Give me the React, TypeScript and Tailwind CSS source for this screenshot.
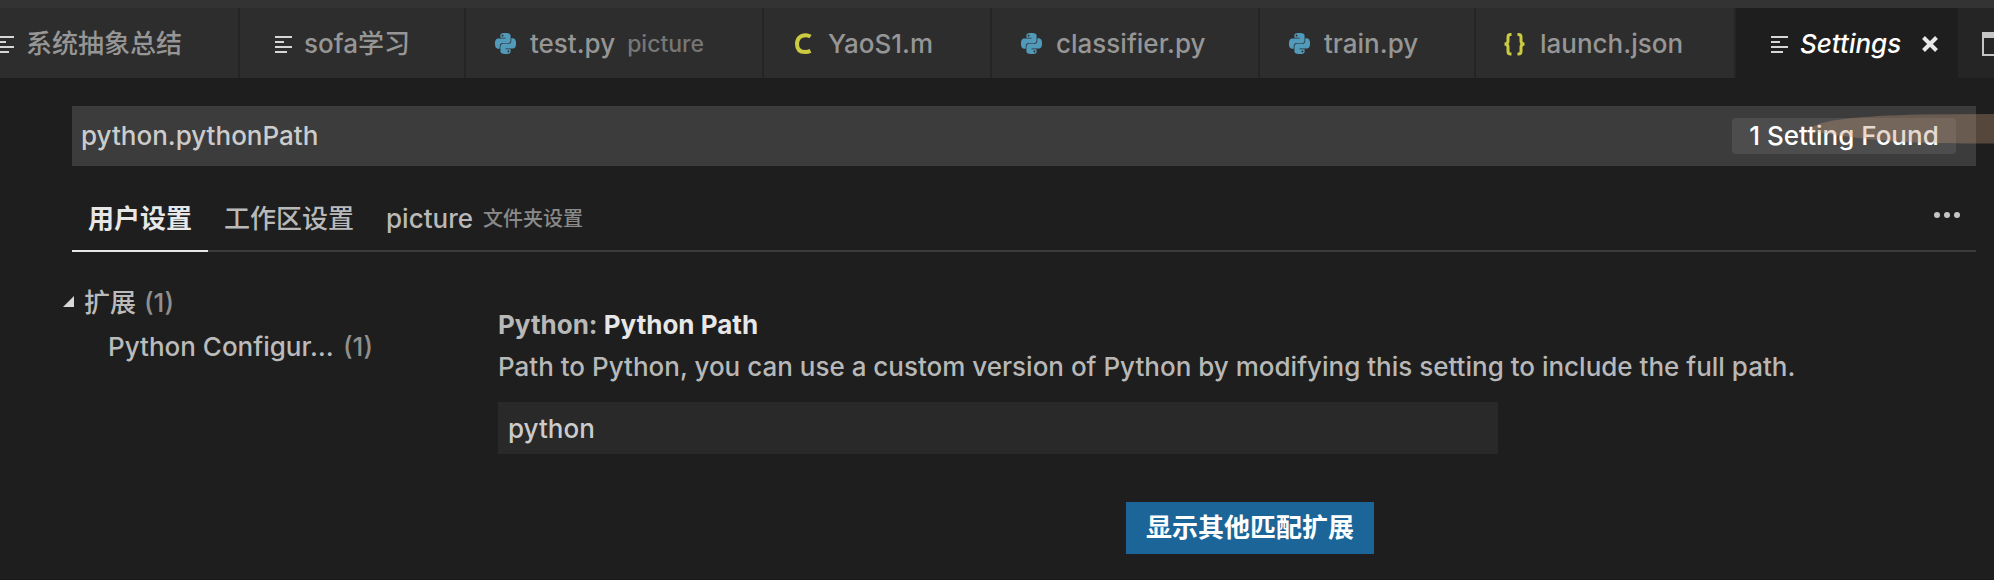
import type { ReactNode } from 'react';

const LinesIcon = () => (
  <svg viewBox="0 0 32 32" className="size-8 shrink-0" fill="#d4d7d6" aria-hidden="true">
    <rect x="11" y="8" width="17" height="2" />
    <rect x="11" y="13" width="9" height="2" />
    <rect x="11" y="18" width="17" height="2" />
    <rect x="11" y="23" width="12" height="2" />
  </svg>
);

const PythonIcon = () => (
  <svg viewBox="0 0 32 32" className="size-8 shrink-0" fill="#519aba" aria-hidden="true">
    <g transform="translate(5 5) scale(0.875)">
      <path
        fillRule="evenodd"
        d="M14.25.18l.9.2.73.26.59.3.45.32.34.34.25.34.16.33.1.3.04.26.02.2-.01.13V8.5l-.05.63-.13.55-.21.46-.26.38-.3.31-.33.25-.35.19-.35.14-.33.1-.3.07-.26.04-.21.02H8.77l-.69.05-.59.14-.5.22-.41.27-.33.32-.27.35-.2.36-.15.37-.1.35-.07.32-.04.27-.02.21v3.06H3.17l-.21-.03-.28-.07-.32-.12-.35-.18-.36-.26-.36-.36-.35-.46-.32-.59-.28-.73-.21-.88-.14-1.05-.05-1.23.06-1.22.16-1.04.24-.87.32-.71.36-.57.4-.44.42-.33.42-.24.4-.16.36-.1.32-.05.24-.01h.16l.06.01h8.16v-.83H6.18l-.01-2.75-.02-.37.05-.34.11-.31.17-.28.25-.26.31-.23.38-.2.44-.18.51-.15.58-.12.64-.1.71-.06.77-.04.84-.02 1.27.05zm-6.3 1.98l-.23.33-.08.41.08.41.23.34.33.22.41.09.41-.09.33-.22.23-.34.08-.41-.08-.41-.23-.33-.33-.22-.41-.09-.41.09zm13.09 3.95l.28.06.32.12.35.18.36.27.36.35.35.47.32.59.28.73.21.88.14 1.04.05 1.23-.06 1.23-.16 1.04-.24.86-.32.71-.36.57-.4.45-.42.33-.42.24-.4.16-.36.09-.32.05-.24.02-.16-.01h-8.22v.82h5.84l.01 2.76.02.36-.05.34-.11.31-.17.29-.25.25-.31.24-.38.2-.44.17-.51.15-.58.13-.64.09-.71.07-.77.04-.84.01-1.27-.04-1.07-.14-.9-.2-.73-.25-.59-.3-.45-.33-.34-.34-.25-.34-.16-.33-.1-.3-.04-.25-.02-.2.01-.13v-5.34l.05-.64.13-.54.21-.46.26-.38.3-.32.33-.24.35-.2.35-.14.33-.1.3-.06.26-.04.21-.02.13-.01h5.84l.69-.05.59-.14.5-.21.41-.28.33-.32.27-.35.2-.36.15-.36.1-.35.07-.32.04-.28.02-.21V6.07h2.09l.14.01zm-6.47 14.25l-.23.33-.08.41.08.41.23.33.33.23.41.08.41-.08.33-.23.23-.33.08-.41-.08-.41-.23-.33-.33-.23-.41-.08-.41.08z"
      />
    </g>
  </svg>
);

const CIcon = () => (
  <svg viewBox="0 0 32 32" className="size-8 shrink-0" fill="none" stroke="#cbcb41" strokeWidth="4" aria-hidden="true">
    <path d="M22.500 8.600C21 7.600 19.400 7.200 17.600 7.200C12.300 7.200 9 10.800 9 16C9 21.400 12.200 24 17.200 24C19.400 24 21 23.600 22.500 22.900" />
  </svg>
);

const BracesIcon = () => (
  <svg viewBox="0 0 32 32" className="size-8 shrink-0" fill="none" stroke="#cbcb41" strokeWidth="3" aria-hidden="true">
    <path d="M11.500 6.500H10.500Q8 6.500 8 9V13Q8 16 4.500 16Q8 16 8 19V23.500Q8 26 10.500 26H11.500" />
    <path d="M17.500 6.500H18.500Q21 6.500 21 9V13Q21 16 24.500 16Q21 16 21 19V23.500Q21 26 18.500 26H17.500" />
  </svg>
);

type Tab = { name: string; hint?: string; icon: ReactNode; width: string };

const tabs: Tab[] = [
  { name: '系统抽象总结', icon: <LinesIcon />, width: 'w-[278px] -ml-[38px]' },
  { name: 'sofa学习', icon: <LinesIcon />, width: 'w-[226px]' },
  { name: 'test.py', hint: 'picture', icon: <PythonIcon />, width: 'w-[298px]' },
  { name: 'YaoS1.m', icon: <CIcon />, width: 'w-[228px]' },
  { name: 'classifier.py', icon: <PythonIcon />, width: 'w-[268px]' },
  { name: 'train.py', icon: <PythonIcon />, width: 'w-[216px]' },
  { name: 'launch.json', icon: <BracesIcon />, width: 'w-[260px]' },
];

function EditorTabs() {
  return (
    <header className="flex h-[78px] overflow-hidden border-t-8 border-[#333333] bg-[#252526]">
      {tabs.map((tab) => (
        <button
          key={tab.name}
          className={`flex shrink-0 items-center gap-2 border-r-2 border-[#252526] bg-[#2d2d2d] pt-0.5 pl-6 text-[#969696] ${tab.width}`}
        >
          {tab.icon}
          <span>{tab.name}</span>
          {tab.hint && <span className="pl-1 text-[23px] text-[#767676]">{tab.hint}</span>}
        </button>
      ))}
      <div className="flex w-[222px] shrink-0 items-center justify-between bg-[#1e1e1e] pt-0.5 pr-[19px] pl-6 text-white">
        <button className="flex items-center gap-2 italic">
          <LinesIcon />
          Settings
        </button>
        <button aria-label="Close">
          <svg viewBox="0 0 18 18" className="size-[18px]" stroke="#e8e8e8" strokeWidth="4" aria-hidden="true">
            <path d="M2.500 2.500L15.500 15.500M15.500 2.500L2.500 15.500" />
          </svg>
        </button>
      </div>
      <button aria-label="Split editor" className="ml-6 shrink-0 pt-0.5">
        <svg viewBox="0 0 28 24" className="h-6 w-7" aria-hidden="true">
          <path fill="#c5c5c5" fillRule="evenodd" d="M0 0H28V24H0ZM2 6V22H13V6ZM15 6V22H26V6Z" />
        </svg>
      </button>
    </header>
  );
}

function SearchBar() {
  return (
    <div className="relative flex h-[60px] items-center bg-[#3c3c3c] pr-5">
      <input
        aria-label="Search settings"
        defaultValue="python.pythonPath"
        className="h-full min-w-0 flex-1 bg-transparent pb-0.5 pl-[9px] text-[#cccccc] outline-none"
      />
      <span className="flex h-9 w-[224px] items-center justify-center rounded-sm bg-[#4d4d4d] text-white">
        1 Setting Found
      </span>
      <svg viewBox="0 0 184 32" className="pointer-events-none absolute top-2 -right-[18px] h-8 w-[184px]" aria-hidden="true">
        <path
          fill="rgb(193 150 121)"
          fillOpacity="0.35"
          d="M2 14C8 6 50 2 110 0.500Q140 0 184 0V29.500C130 29.500 90 29 50 24C20 20 -4 18 2 14Z"
        />
      </svg>
    </div>
  );
}

function ScopeTabs() {
  return (
    <nav className="mt-6 flex h-[62px] items-stretch border-b-2 border-[#3c3c3c] text-[#b9b9b9]">
      <button className="-mb-0.5 border-b-2 border-[#e7e7e7] px-4 pb-0.5 font-bold text-[#e7e7e7]">用户设置</button>
      <button className="px-4 pb-0.5">工作区设置</button>
      <button className="flex items-center gap-2.5 px-4 pb-0.5">
        picture <span className="text-[20px] text-[#8a8a8a]">文件夹设置</span>
      </button>
      <button aria-label="More actions" className="mr-4 ml-auto pb-2.5">
        <svg viewBox="0 0 26 6" className="h-1.5 w-[26px]" fill="#c5c5c5" aria-hidden="true">
          <circle cx="3" cy="3" r="3" />
          <circle cx="13" cy="3" r="3" />
          <circle cx="23" cy="3" r="3" />
        </svg>
      </button>
    </nav>
  );
}

export default function App() {
  return (
    <div className="flex min-h-screen flex-col overflow-hidden border-b border-[#1c171b] bg-[#1e1e1e] font-['Inter','Noto_Sans_CJK_SC',sans-serif] text-[26px] leading-9 font-medium whitespace-nowrap">
      <EditorTabs />
      <main className="pt-7 pr-[18px] pl-[72px]">
        <SearchBar />
        <ScopeTabs />
        <div className="flex">
          <ul className="-ml-[9px] w-[435px] shrink-0 pt-[29px] leading-[44px] text-[#bbbbbb]">
            <li className="flex items-center">
              <svg viewBox="0 0 11 11" className="mr-2.5 mb-1 size-[11px]" fill="#d8d8d8" aria-hidden="true">
                <path d="M11 0V11H0Z" />
              </svg>
              扩展 <span className="ml-2 text-[#8f8f8f]">(1)</span>
            </li>
            <li className="flex items-center pl-[45px]">
              <span className="w-[235px]">Python Configur…</span>
              <span className="text-[#8f8f8f]">(1)</span>
            </li>
          </ul>
          <section className="min-w-0 flex-1 pt-[52px]">
            <h2 className="leading-[42px] font-bold text-[#b8b8b8]">
              Python: <span className="text-[#e7e7e7]">Python Path</span>
            </h2>
            <label htmlFor="python-path" className="block leading-[42px] text-[#b8b8b8]">
              Path to Python, you can use a custom version of Python by modifying this setting to include the full path.
            </label>
            <input
              id="python-path"
              defaultValue="python"
              className="mt-[14px] block h-[52px] w-full max-w-[1000px] bg-[#292929] px-2.5 text-[#cccccc] outline-none"
            />
            <div className="mt-12 flex justify-center pl-[26px]">
              <button className="h-[52px] bg-[#1c6599] px-5 font-bold text-white">显示其他匹配扩展</button>
            </div>
          </section>
        </div>
      </main>
    </div>
  );
}
